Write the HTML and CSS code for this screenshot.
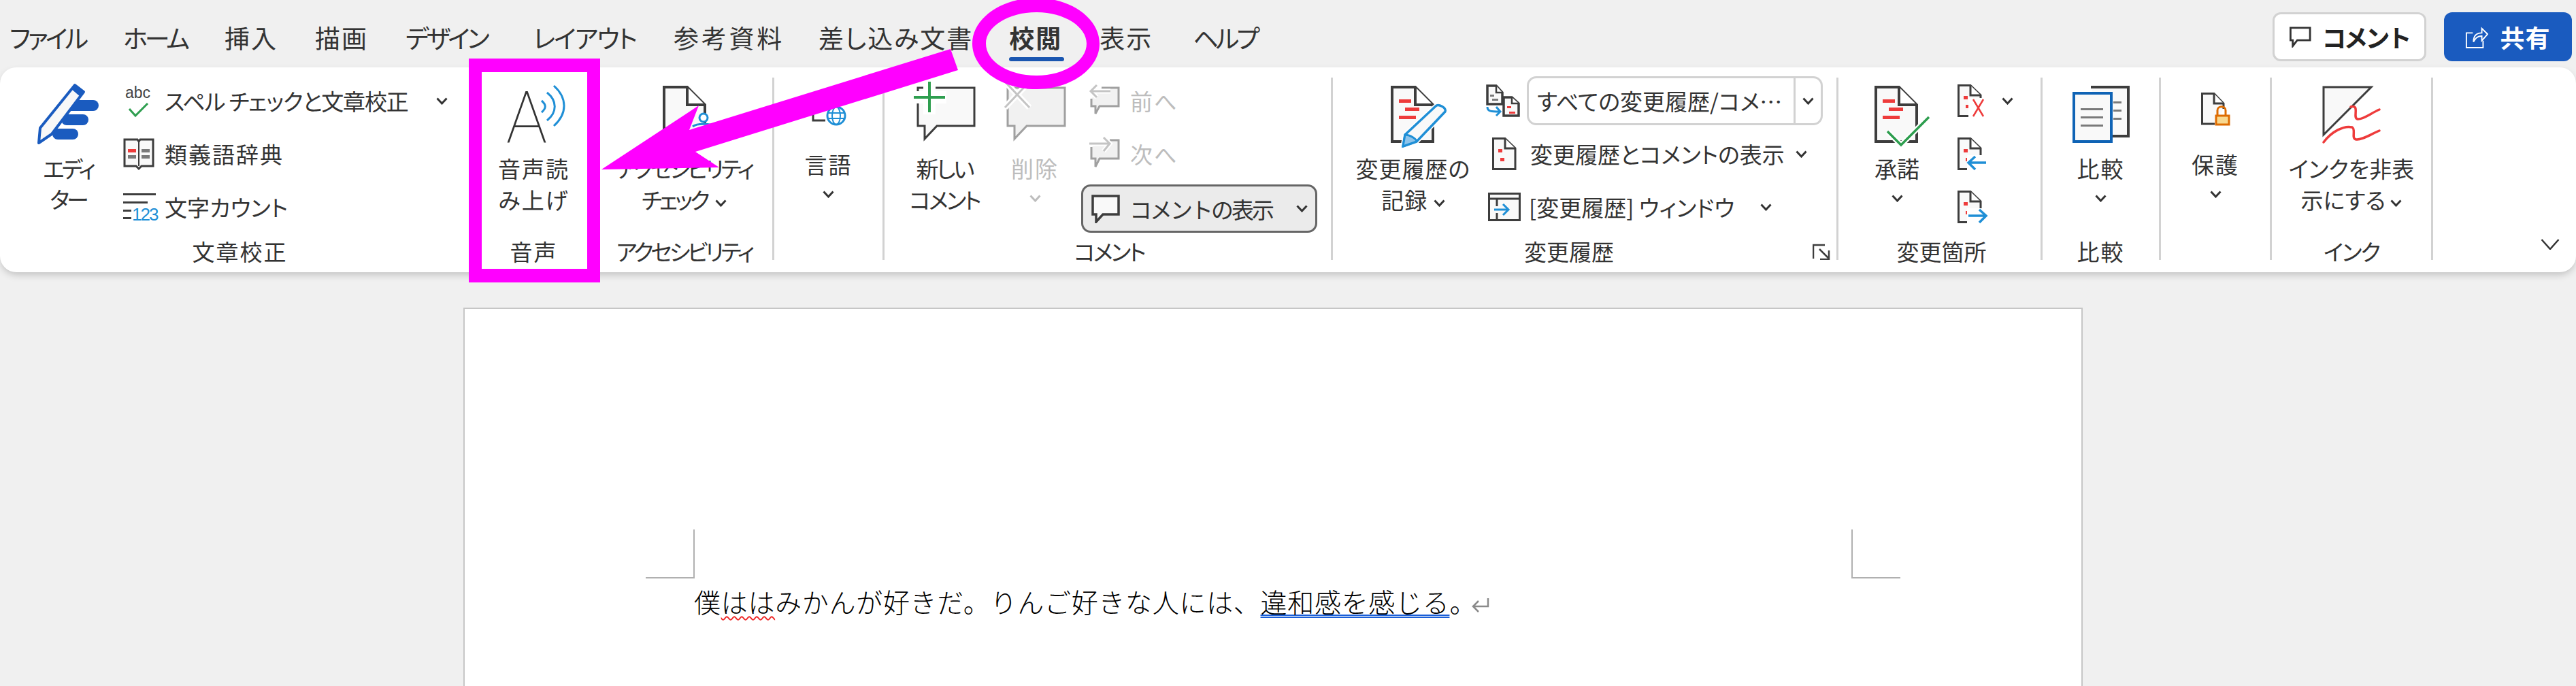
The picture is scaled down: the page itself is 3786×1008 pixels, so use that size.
FILE: index.html
```html
<!DOCTYPE html>
<html lang="ja">

<head>
    <meta charset="UTF-8">
    <title>校閲 - 音声読み上げ</title>
    <link rel="stylesheet" href="styles.css">
</head>

<body>
    <svg class="defs" width="0" height="0">
        <symbol id="chev" viewBox="0 0 17 11">
            <path d="M1.5 1.5 8.5 9 15.5 1.5" fill="none" stroke="currentColor" stroke-width="3"/>
        </symbol>
        <symbol id="minidoc" viewBox="0 0 36 48">
            <path d="M1.5 1.5H19L34 16V46.5H1.5Z" fill="#f9f9f9" stroke="#3d3d3d" stroke-width="3"/>
            <path d="M19 1.5V16H34" fill="#fff" stroke="#3d3d3d" stroke-width="3"/>
            <rect x="9" y="17" width="6" height="5" fill="#ee3b3b"/>
            <rect x="12" y="30" width="6" height="5" fill="#ee3b3b"/>
        </symbol>
        <symbol id="bigdoc" viewBox="0 0 64 84">
            <path d="M2 2H36L62 28V82H2Z" fill="#f9f9f9" stroke="#3d3d3d" stroke-width="4"/>
            <path d="M36 2V28H62" fill="#fff" stroke="#3d3d3d" stroke-width="4"/>
            <rect x="12" y="20" width="18" height="5" fill="#ee3b3b"/>
            <rect x="21" y="32" width="21" height="5" fill="#ee3b3b"/>
            <rect x="12" y="44" width="25" height="5" fill="#ee3b3b"/>
        </symbol>
    </svg>

    <header class="titlebar">
        <nav class="tabs">
            <span class="tab tab-kana">ファイル</span>
            <span class="tab tab-kana">ホーム</span>
            <span class="tab tab-kanji">挿入</span>
            <span class="tab tab-kanji">描画</span>
            <span class="tab tab-kana">デザイン</span>
            <span class="tab tab-layout">レイアウト</span>
            <span class="tab tab-ref">参考資料</span>
            <span class="tab tab-mail">差し込み文書</span>
            <span class="tab tab-kanji tab-active">校閲</span>
            <span class="tab tab-kanji">表示</span>
            <span class="tab tab-kana tab-help">ヘルプ</span>
        </nav>
        <div class="actions">
            <button class="btn-comment">
                <svg width="32" height="31" viewBox="0 0 34 32"><path d="M1.5 1.5H32V21H12L5 30V21H1.5Z" fill="#fff" stroke="#333" stroke-width="3"/></svg>
                コメント
            </button>
            <button class="btn-share">
                <svg width="34" height="36" viewBox="0 0 36 36" fill="none" stroke="#fff" stroke-width="2"><path d="M12 12H2V35H28V24"/><path d="M13 26C13 16 18 12 26 12V5L35 14 26 24V17C19 17 16 20 13 26Z"/></svg>
                共有
            </button>
        </div>
    </header>

    <section class="ribbon">
        <!-- 文章校正 -->
        <div class="group g-proof">
            <div class="group-body">
                <div class="big big-editor">
                    <div class="slot">
                        <svg class="big-icon" width="90" height="92" viewBox="0 0 90 92">
                            <rect x="40" y="25" width="50" height="16" rx="8" fill="#1a5bbf"/>
                            <rect x="35" y="46" width="40" height="16" rx="8" fill="#1a5bbf"/>
                            <rect x="22" y="67" width="38" height="16" rx="8" fill="#1a5bbf"/>
                            <path d="M2 88 4 66 55 3 68 13 21 75Z" fill="#f8f8f8" stroke="#1a5bbf" stroke-width="4" stroke-linejoin="round"/>
                            <path d="M50 9 55 3 68 13 63 20Z" fill="#1a5bbf"/>
                        </svg>
                    </div>
                    <span>エディ<br>ター</span>
                </div>
                <div class="small-col">
                    <div class="row">
                        <svg class="row-icon" width="49" height="48" viewBox="0 0 49 48">
                            <text x="3" y="20" class="abc">abc</text>
                            <path d="M9 36 18 46 36 28" fill="none" stroke="#2e9e4f" stroke-width="3"/>
                        </svg>
                        <span class="row-text text-spell">スペル チェックと文章校正</span>
                        <svg class="chev chev-far" width="17" height="11"><use href="#chev"/></svg>
                    </div>
                    <div class="row">
                        <svg class="row-icon" width="49" height="46" viewBox="0 0 49 46">
                            <path d="M2 2H21L23 5 25 2H44V41H27L23 45 19 41H2Z" fill="#f9f9f9" stroke="#3d3d3d" stroke-width="3"/>
                            <path d="M23 5V41" stroke="#3d3d3d" stroke-width="2"/>
                            <rect x="7" y="16" width="12" height="5" fill="#ee3b3b"/>
                            <rect x="27" y="16" width="12" height="5" fill="#7a7a7a"/>
                            <rect x="7" y="25" width="12" height="5" fill="#7a7a7a"/>
                            <rect x="27" y="25" width="12" height="5" fill="#7a7a7a"/>
                        </svg>
                        <span class="row-text wide">類義語辞典</span>
                    </div>
                    <div class="row">
                        <svg class="row-icon" width="49" height="42" viewBox="0 0 49 42">
                            <rect y="1" width="48" height="3" fill="#3d3d3d"/>
                            <rect y="13" width="36" height="3" fill="#3d3d3d"/>
                            <rect y="25" width="12" height="3" fill="#3d3d3d"/>
                            <rect y="36" width="12" height="3" fill="#3d3d3d"/>
                            <text x="13" y="41" class="num">123</text>
                        </svg>
                        <span class="row-text">文字カウント</span>
                    </div>
                </div>
            </div>
            <div class="group-label label-proof wide">文章校正</div>
        </div>

        <!-- 音声 -->
        <div class="group g-voice">
            <div class="group-body">
                <div class="big big-fill wide">
                    <div class="slot">
                        <svg class="big-icon" width="88" height="86" viewBox="0 0 88 86">
                            <text x="3" y="84" class="letter-a" textLength="62" lengthAdjust="spacingAndGlyphs">A</text>
                            <g fill="none" stroke="#1f8fd6" stroke-width="3">
                                <path d="M55 22C62 28 62 33 55 39"/>
                                <path d="M63 10C78 22 78 39 63 51"/>
                                <path d="M73 0C93 18 93 41 73 59"/>
                            </g>
                        </svg>
                    </div>
                    <span>音声読<br>み上げ</span>
                </div>
            </div>
            <div class="group-label wide">音声</div>
        </div>

        <!-- アクセシビリティ -->
        <div class="group g-access">
            <div class="group-body">
                <div class="big big-fill">
                    <div class="slot">
                        <svg class="big-icon" width="64" height="86" viewBox="0 0 64 86">
                            <path d="M2 2H36L62 28V82H2Z" fill="#f9f9f9" stroke="#3d3d3d" stroke-width="4"/>
                            <path d="M36 2V28H62" fill="#fff" stroke="#3d3d3d" stroke-width="4"/>
                            <g fill="#fff" stroke="#1f8fd6" stroke-width="3">
                                <circle cx="60" cy="47" r="6"/>
                                <path d="M44 60C50 55 70 55 78 60"/>
                            </g>
                        </svg>
                    </div>
                    <span>アクセシビリティ<br>チェック <svg class="chev chev-check" width="17" height="11"><use href="#chev"/></svg></span>
                </div>
            </div>
            <div class="group-label">アクセシビリティ</div>
        </div>

        <!-- 言語 -->
        <div class="group g-lang">
            <div class="group-body">
                <div class="big big-fill big-short wide">
                    <div class="slot">
                        <svg class="big-icon" width="50" height="60" viewBox="0 0 50 60">
                            <path d="M2 30V51H20" fill="none" stroke="#3d3d3d" stroke-width="3"/>
                            <circle cx="36" cy="44" r="13" fill="#fff" stroke="#1f8fd6" stroke-width="3"/>
                            <ellipse cx="36" cy="44" rx="6" ry="13" fill="none" stroke="#1f8fd6" stroke-width="2"/>
                            <path d="M23 40H49M23 48H49" stroke="#1f8fd6" stroke-width="2"/>
                        </svg>
                    </div>
                    <span>言語</span>
                    <svg class="chev chev-line" width="17" height="11"><use href="#chev"/></svg>
                </div>
            </div>
        </div>

        <!-- コメント -->
        <div class="group g-comment">
            <div class="group-body">
                <div class="big big-new">
                    <div class="slot">
                        <svg class="big-icon" width="90" height="80" viewBox="0 0 90 80">
                            <path d="M6 3H89V59H34L16 78V59H6Z" fill="#f9f9f9" stroke="#3d3d3d" stroke-width="3"/>
                            <rect x="14" y="-8" width="18" height="50" fill="#fff"/>
                            <rect x="-2" y="8" width="50" height="18" fill="#fff"/>
                            <path d="M23 -6V39M0 17H46" stroke="#2e9e4f" stroke-width="4"/>
                        </svg>
                    </div>
                    <span>新しい<br>コメント</span>
                </div>
                <div class="big big-del is-off wide">
                    <div class="slot">
                        <svg class="big-icon" width="90" height="80" viewBox="0 0 90 80">
                            <path d="M5 3H89V59H33L15 78V59H5Z" fill="#f1f1f1" stroke="#a0a0a0" stroke-width="3"/>
                            <path d="M1 -6 37 32M37 -6 1 32" stroke="#fff" stroke-width="9"/>
                            <path d="M1 -6 37 32M37 -6 1 32" stroke="#c4c4c4" stroke-width="3"/>
                        </svg>
                    </div>
                    <span>削除</span>
                    <svg class="chev chev-line" width="17" height="11"><use href="#chev"/></svg>
                </div>
                <div class="small-col small-comment">
                    <div class="row is-off">
                        <svg class="row-icon nav-icon" width="45" height="45" viewBox="0 0 45 45">
                            <path d="M18 3H43V30H15L9 41V30H3V19" fill="#f1f1f1" stroke="#a0a0a0" stroke-width="3"/>
                            <path d="M31 8H2M11 -1 2 8 11 17" fill="none" stroke="#fff" stroke-width="7"/>
                            <path d="M31 8H2M11 -1 2 8 11 17" fill="none" stroke="#c4c4c4" stroke-width="3"/>
                        </svg>
                        <span class="row-text wide">前へ</span>
                    </div>
                    <div class="row is-off">
                        <svg class="row-icon nav-icon" width="45" height="45" viewBox="0 0 45 45">
                            <path d="M3 12V29H9V41L15 29H43V2H30" fill="#f1f1f1" stroke="#a0a0a0" stroke-width="3"/>
                            <path d="M0 7H30M21 -2 30 7 21 18" fill="none" stroke="#fff" stroke-width="7"/>
                            <path d="M0 7H30M21 -2 30 7 21 18" fill="none" stroke="#c4c4c4" stroke-width="3"/>
                        </svg>
                        <span class="row-text wide">次へ</span>
                    </div>
                    <button class="btn-show">
                        <svg width="42" height="42" viewBox="0 0 42 42"><path d="M2 2H40V29H17L7 40V29H2Z" fill="#f9f9f9" stroke="#3d3d3d" stroke-width="3.500"/></svg>
                        <span class="row-text">コメントの表示</span>
                        <svg class="chev" width="17" height="11"><use href="#chev"/></svg>
                    </button>
                </div>
            </div>
            <div class="group-label label-comment">コメント</div>
        </div>

        <!-- 変更履歴 -->
        <div class="group g-track">
            <div class="group-body">
                <div class="big big-track">
                    <div class="slot">
                        <svg class="big-icon icon-right" width="82" height="92" viewBox="0 0 82 92">
                            <use href="#bigdoc" width="64" height="84"/>
                            <path d="M18 89 21 72 66 30C70 26 82 32 80 38L38 82Z" fill="#fff" stroke="#fff" stroke-width="7"/>
                            <path d="M18 89 21 72 66 30C70 26 82 32 80 38L38 82Z" fill="#f9f9f9" stroke="#1f8fd6" stroke-width="3.500" stroke-linejoin="round"/>
                            <path d="M18 89 21 72C28 72 38 78 38 82Z" fill="#8ec4ea" stroke="#1f8fd6" stroke-width="3"/>
                        </svg>
                    </div>
                    <span>変更履歴の<br>記録 <svg class="chev" width="17" height="11"><use href="#chev"/></svg></span>
                </div>
                <div class="small-col small-track">
                    <div class="row">
                        <svg class="row-icon" width="50" height="48" viewBox="0 0 50 48">
                            <path d="M2 2H15L24 12V29H2Z" fill="#f9f9f9" stroke="#3d3d3d" stroke-width="3.500"/>
                            <path d="M15 2V12H24" fill="#fff" stroke="#3d3d3d" stroke-width="2.500"/>
                            <rect x="6" y="15" width="6" height="3" fill="#7a7a7a"/>
                            <rect x="9" y="21" width="9" height="3" fill="#7a7a7a"/>
                            <path d="M26 19H38L48 28V46H26Z" fill="#f9f9f9" stroke="#3d3d3d" stroke-width="3.500"/>
                            <path d="M38 19V28H48" fill="#fff" stroke="#3d3d3d" stroke-width="2.500"/>
                            <rect x="31" y="32" width="6" height="3" fill="#ee3b3b"/>
                            <rect x="34" y="40" width="9" height="3" fill="#ee3b3b"/>
                            <path d="M2 33C2 40 8 40 20 40M15 33 21 40 15 46" fill="none" stroke="#1f8fd6" stroke-width="3"/>
                        </svg>
                        <div class="select">
                            <span class="row-text">すべての変更履歴/コメ…</span>
                            <span class="select-arrow"><svg class="chev" width="17" height="11"><use href="#chev"/></svg></span>
                        </div>
                    </div>
                    <div class="row">
                        <svg class="row-icon track-icon2" width="36" height="48"><use href="#minidoc"/></svg>
                        <span class="row-text">変更履歴とコメントの表示</span>
                        <svg class="chev chev-near" width="17" height="11"><use href="#chev"/></svg>
                    </div>
                    <div class="row">
                        <svg class="row-icon track-icon3" width="48" height="42" viewBox="0 0 48 42">
                            <rect x="1.500" y="1.500" width="45" height="39" fill="#f9f9f9" stroke="#3d3d3d" stroke-width="3"/>
                            <path d="M1 9H47M13 9V20M13 30V41" stroke="#3d3d3d" stroke-width="3"/>
                            <path d="M9 25H29M22 17 30 25 22 33" fill="none" stroke="#1f8fd6" stroke-width="3"/>
                        </svg>
                        <span class="row-text">[変更履歴] ウィンドウ</span>
                        <svg class="chev chev-window" width="17" height="11"><use href="#chev"/></svg>
                    </div>
                </div>
            </div>
            <div class="group-label label-track">変更履歴</div>
            <svg class="launcher" width="26" height="24" viewBox="0 0 26 24" fill="none" stroke="#3d3d3d" stroke-width="2.500">
                <path d="M1 22V2H18M10 8 23 21M24 10V23H11"/>
            </svg>
        </div>

        <!-- 変更箇所 -->
        <div class="group g-change">
            <div class="group-body">
                <div class="big big-accept">
                    <div class="slot">
                        <svg class="big-icon icon-right" width="82" height="90" viewBox="0 0 82 90">
                            <use href="#bigdoc" width="64" height="84"/>
                            <path d="M19 67 39 87 80 46" fill="none" stroke="#fff" stroke-width="8"/>
                            <path d="M19 67 39 87 80 46" fill="none" stroke="#2e9e4f" stroke-width="3.500"/>
                        </svg>
                    </div>
                    <span>承諾</span>
                    <svg class="chev chev-line" width="17" height="11"><use href="#chev"/></svg>
                </div>
                <div class="small-col small-change">
                    <div class="row">
                        <svg class="row-icon" width="44" height="48" viewBox="0 0 44 48">
                            <use href="#minidoc" width="36" height="48"/>
                            <rect x="16" y="20" width="26" height="28" fill="#fff"/>
                            <path d="M23 22 38 47M38 22 23 47" stroke="#ee3b3b" stroke-width="2.500"/>
                        </svg>
                        <svg class="chev chev-mid" width="17" height="11"><use href="#chev"/></svg>
                    </div>
                    <div class="row">
                        <svg class="row-icon" width="44" height="48" viewBox="0 0 44 48">
                            <use href="#minidoc" width="36" height="48"/>
                            <rect x="14" y="26" width="28" height="22" fill="#fff"/>
                            <path d="M42 37H17M26 28 16 37 26 47" fill="none" stroke="#1f8fd6" stroke-width="3.500"/>
                        </svg>
                    </div>
                    <div class="row">
                        <svg class="row-icon" width="44" height="48" viewBox="0 0 44 48">
                            <use href="#minidoc" width="36" height="48"/>
                            <rect x="14" y="26" width="28" height="22" fill="#fff"/>
                            <path d="M16 37H41M32 28 42 37 32 47" fill="none" stroke="#1f8fd6" stroke-width="3.500"/>
                        </svg>
                    </div>
                </div>
            </div>
            <div class="group-label label-change">変更箇所</div>
        </div>

        <!-- 比較 -->
        <div class="group g-compare">
            <div class="group-body">
                <div class="big big-fill wide">
                    <div class="slot">
                        <svg class="big-icon" width="84" height="84" viewBox="0 0 84 84">
                            <path d="M27 2H82V74H50" fill="#f9f9f9" stroke="#3d3d3d" stroke-width="4"/>
                            <rect x="60" y="23" width="12" height="3" fill="#7a7a7a"/>
                            <rect x="60" y="35" width="12" height="3" fill="#7a7a7a"/>
                            <rect x="60" y="47" width="12" height="3" fill="#7a7a7a"/>
                            <rect x="2" y="11" width="55" height="71" fill="#f9f9f9" stroke="#0f63b5" stroke-width="4"/>
                            <rect x="12" y="33" width="33" height="3" fill="#7a7a7a"/>
                            <rect x="12" y="45" width="33" height="3" fill="#7a7a7a"/>
                            <rect x="12" y="57" width="33" height="3" fill="#7a7a7a"/>
                        </svg>
                    </div>
                    <span>比較</span>
                    <svg class="chev chev-line" width="17" height="11"><use href="#chev"/></svg>
                </div>
            </div>
            <div class="group-label wide">比較</div>
        </div>

        <!-- 保護 -->
        <div class="group g-protect">
            <div class="group-body">
                <div class="big big-fill big-short wide">
                    <div class="slot slot-protect">
                        <svg class="big-icon" width="42" height="48" viewBox="0 0 42 48">
                            <path d="M20 46H1.500V1.500H19L33 16V24" fill="#f9f9f9" stroke="#3d3d3d" stroke-width="3"/>
                            <path d="M19 1.500V16H33" fill="#fff" stroke="#3d3d3d" stroke-width="3"/>
                            <path d="M24 34V26C24 19 36 19 36 26V34" fill="none" stroke="#dd6b00" stroke-width="3"/>
                            <rect x="22" y="34" width="19" height="13" fill="#f8d88f" stroke="#dd6b00" stroke-width="3"/>
                        </svg>
                    </div>
                    <span>保護</span>
                    <svg class="chev chev-line" width="17" height="11"><use href="#chev"/></svg>
                </div>
            </div>
        </div>

        <!-- インク -->
        <div class="group g-ink">
            <div class="group-body">
                <div class="big big-fill">
                    <div class="slot">
                        <svg class="big-icon" width="86" height="84" viewBox="0 0 86 84">
                            <path d="M2 2H72L2 72Z" fill="#f9f9f9" stroke="#3d3d3d" stroke-width="3"/>
                            <path d="M42 31C56 27 44 48 52 49 60 50 72 40 84 35" fill="none" stroke="#ee3b3b" stroke-width="3.500" stroke-linecap="round"/>
                            <path d="M2 83C14 67 32 58 44 61 50 64 42 78 50 79 58 80 70 72 84 66" fill="none" stroke="#ee3b3b" stroke-width="3.500" stroke-linecap="round"/>
                        </svg>
                    </div>
                    <span>インクを非表<br>示にする <svg class="chev" width="17" height="11"><use href="#chev"/></svg></span>
                </div>
            </div>
            <div class="group-label label-ink">インク</div>
        </div>

        <div class="collapse">
            <svg width="28" height="16" viewBox="0 0 28 16"><path d="M1.500 1 14 15 26.500 1" fill="none" stroke="#333" stroke-width="2.500"/></svg>
        </div>
    </section>

    <main class="canvas">
        <article class="page">
            <div class="crops">
                <span class="crop crop-left"></span>
                <span class="crop crop-right"></span>
            </div>
            <p class="doc-line">僕<span class="squiggle">はは</span>みかんが好きだ。りんご好きな人には、<span class="double">違和感を感じる</span>。<svg class="return" width="26" height="22" viewBox="0 0 26 22" fill="none" stroke="#8a8a8a" stroke-width="2.500"><path d="M24 1V13H3M10 5 2 13 10 21"/></svg></p>
        </article>
    </main>

    <!-- callouts drawn over the screenshot -->
    <div class="callout-box"></div>
    <svg class="callouts" width="3786" height="1008" viewBox="0 0 3786 1008">
        <path d="M1523 -3C1574 -3 1616 27 1616 64 1616 101 1574 131 1523 131 1472 131 1429 101 1429 64 1429 27 1472 -3 1523 -3ZM1523 18C1482 18 1449 39 1449 64 1449 90 1482 111 1523 111 1564 111 1597 90 1597 64 1597 39 1564 18 1523 18Z" fill="#ff00ff" fill-rule="evenodd"/>
        <path d="M884 249 1027 155 1013 191 1397 72 1408 103 1022 223 1057 246Z" fill="#ff00ff"/>
    </svg>
</body>

</html>
```
FILE: styles.css
```css
* {
    box-sizing: border-box;
}
html, body {
    margin: 0;
    height: 1008px;
    overflow: hidden;
}
body {
    position: relative;
    width: 3786px;
    background-color: #f0f0f0;
    color: #333;
    font-family: "Noto Sans CJK JP", sans-serif;
    font-size: 33px;
    font-feature-settings: "palt";
}
.defs {
    position: absolute;
}
button {
    font-family: inherit;
    cursor: pointer;
}
.wide {
    letter-spacing: 2px;
}

/* title row */
.titlebar {
    height: 99px;
    display: flex;
    justify-content: space-between;
    padding: 18px 6px 9px 14px;
}
.tabs {
    display: flex;
    gap: 55px;
    height: 72px;
}
.tab {
    font-size: 37px;
    line-height: 74px;
    position: relative;
    white-space: nowrap;
}
.tab-kana {
    letter-spacing: -4px;
}
.tab-layout {
    margin-left: 13px;
    letter-spacing: -2px;
}
.tab-kanji {
    letter-spacing: 2px;
}
.tab-ref {
    letter-spacing: 3.700px;
}
.tab-mail {
    margin-left: -5px;
    letter-spacing: 2px;
}
.tab-active {
    margin-left: -2px;
    font-weight: 700;
}
.tab-help {
    margin-left: 4px;
}
.tab-active::after {
    content: "";
    position: absolute;
    left: 0;
    right: -3px;
    bottom: 0;
    height: 6px;
    border-radius: 3px;
    background-color: #1a56b0;
}
.actions {
    display: flex;
    gap: 26px;
}
.btn-comment,
.btn-share {
    height: 72px;
    display: flex;
    align-items: center;
    justify-content: center;
    font-size: 36px;
    font-weight: 700;
    border-radius: 12px;
}
.btn-comment {
    width: 226px;
    gap: 15px;
    background-color: #fff;
    border: 3px solid #d2d2d2;
    color: #222;
    letter-spacing: -4px;
}
.btn-share {
    width: 188px;
    gap: 17px;
    background-color: #1a5bbf;
    border: 0;
    color: #fff;
    letter-spacing: 1px;
}

/* ribbon */
.ribbon {
    height: 301px;
    padding-top: 15px;
    display: flex;
    background-color: #fff;
    border-radius: 24px;
    box-shadow: 0 5px 12px -2px rgba(0,0,0,0.22);
}
.group {
    height: 268px;
    display: flex;
    flex-direction: column;
    position: relative;
    border-right: 3px solid #d2d2d2;
    flex: none;
}
.group-body {
    flex: 1;
    display: flex;
}
.group-label {
    height: 26px;
    line-height: 26px;
    text-align: center;
    white-space: nowrap;
}
.g-proof { width: 696px; }
.g-voice { width: 180px; }
.g-access { width: 262px; letter-spacing: -4px; }
.g-lang { width: 162px; }
.g-comment { width: 659px; }
.g-track { width: 743px; }
.g-change { width: 300px; }
.g-compare { width: 174px; }
.g-protect { width: 163px; }
.g-ink { width: 237px; }

.label-proof { padding-left: 12px; }
.label-comment { padding-left: 4px; letter-spacing: -3px; }
.label-track { padding-right: 46px; }
.label-change { padding-left: 6px; }
.label-ink { letter-spacing: -2px; }

/* large buttons: icon slot on top, text below */
.big {
    padding-top: 12px;
    display: flex;
    flex-direction: column;
    align-items: center;
    text-align: center;
    line-height: 46px;
    white-space: nowrap;
    flex: none;
}
.slot {
    height: 98px;
}
.big-icon {
    display: block;
    overflow: visible;
}
.icon-right {
    margin-left: 16px;
}
.big-fill {
    width: 100%;
}
.big-short .slot {
    height: 92px;
}
.slot-protect {
    padding-top: 10px;
}
.big-editor {
    width: 120px;
    margin-left: 40px;
    padding-top: 8px;
    line-height: 45px;
    letter-spacing: -4px;
}
.big-editor .slot {
    height: 103px;
}
.big-new {
    width: 180px;
    margin-left: -2px;
    letter-spacing: -3px;
}
.big-del {
    width: 130px;
    margin-left: -28px;
    padding-left: 12px;
}
.big-track {
    width: 200px;
    margin-left: 18px;
    letter-spacing: 1px;
}
.big-accept {
    width: 120px;
    margin-left: 26px;
}
.chev {
    color: #333;
    vertical-align: middle;
}
.chev-line {
    margin-top: 16px;
}
.chev-check {
    margin-left: 8px;
}
.is-off,
.is-off .chev {
    color: #bdbdbd;
}

/* small button columns */
.small-col {
    padding-top: 1px;
    display: flex;
    flex-direction: column;
    gap: 12px;
}
.g-proof .small-col {
    margin-left: 21px;
}
.row {
    height: 66px;
    display: flex;
    align-items: center;
    white-space: nowrap;
}
.row-icon {
    flex: none;
    overflow: visible;
}
.row-text {
    margin-left: 12px;
}
.text-spell {
    letter-spacing: -1.200px;
}
.abc {
    font-family: "Liberation Sans", sans-serif;
    font-size: 23px;
    fill: #444;
}
.num {
    font-family: "Liberation Sans", sans-serif;
    font-size: 26px;
    letter-spacing: -2px;
    fill: #1f8fd6;
}
.letter-a {
    font-family: Roboto, sans-serif;
    font-weight: 100;
    font-size: 106px;
    fill: #333;
}
.chev-far {
    margin-left: 41px;
}

.small-comment {
    margin-left: 9px;
}
.nav-icon {
    margin-left: 12px;
}
.nav-icon + .row-text {
    margin-left: 15px;
}
.btn-show {
    width: 347px;
    height: 71px;
    padding: 0 0 0 12px;
    display: flex;
    align-items: center;
    background-color: #ebebeb;
    border: 3px solid #666;
    border-radius: 14px;
    color: #333;
    font-size: 33px;
    white-space: nowrap;
}
.btn-show .row-text {
    margin-left: 14px;
    letter-spacing: -3px;
}
.btn-show .chev {
    margin-left: 35px;
}

.small-track {
    margin-left: 7px;
}
.select {
    width: 435px;
    height: 72px;
    margin-left: 10px;
    display: flex;
    align-items: center;
    justify-content: space-between;
    background-color: #fff;
    border: 3px solid #d2d2d2;
    border-radius: 14px;
}
.select-arrow {
    width: 40px;
    height: 100%;
    display: flex;
    align-items: center;
    justify-content: center;
    border-left: 3px solid #d2d2d2;
}
.track-icon2 {
    margin-left: 9px;
}
.track-icon2 + .row-text {
    margin-left: 20px;
}
.track-icon3 {
    margin-left: 3px;
}
.chev-near {
    margin-left: 16px;
}
.chev-window {
    margin-left: 38px;
}
.small-change {
    margin-left: 29px;
}
.chev-mid {
    margin-left: 21px;
}
.launcher {
    position: absolute;
    right: 9px;
    bottom: 0;
}

.collapse {
    flex: 1;
    height: 268px;
    padding: 237px 24px 0 0;
}
.collapse svg {
    display: block;
    margin-left: auto;
}

/* document */
.canvas {
    padding: 52px 725px 0 681px;
}
.page {
    height: 600px;
    padding: 324px 266px 0 266px;
    background-color: #fff;
    border: 2px solid #c6c6c6;
    border-bottom: 0;
}
.crops {
    display: flex;
    justify-content: space-between;
}
.crop {
    width: 72px;
    height: 72px;
    border-bottom: 2px solid #b0b0b0;
}
.crop-left {
    border-right: 2px solid #b0b0b0;
}
.crop-right {
    border-left: 2px solid #b0b0b0;
}
.doc-line {
    margin: 5px 0 0 71px;
    font-size: 39px;
    line-height: 56px;
    font-weight: 300;
    font-feature-settings: normal;
    letter-spacing: 0.700px;
    color: #000;
    white-space: nowrap;
}
.squiggle {
    text-decoration: underline wavy #e22;
    text-decoration-thickness: 1.500px;
    text-underline-offset: 5px;
}
.double {
    text-decoration: underline double #1a5fd8;
    text-decoration-thickness: 2px;
    text-underline-offset: 3px;
}
.return {
    margin-left: -7px;
}

/* magenta callouts */
.callout-box {
    position: absolute;
    left: 689px;
    top: 86px;
    width: 193px;
    height: 329px;
    border: solid #ff00ff;
    border-width: 20px 19px;
}
.callouts {
    position: absolute;
    left: 0;
    top: 0;
}
```
